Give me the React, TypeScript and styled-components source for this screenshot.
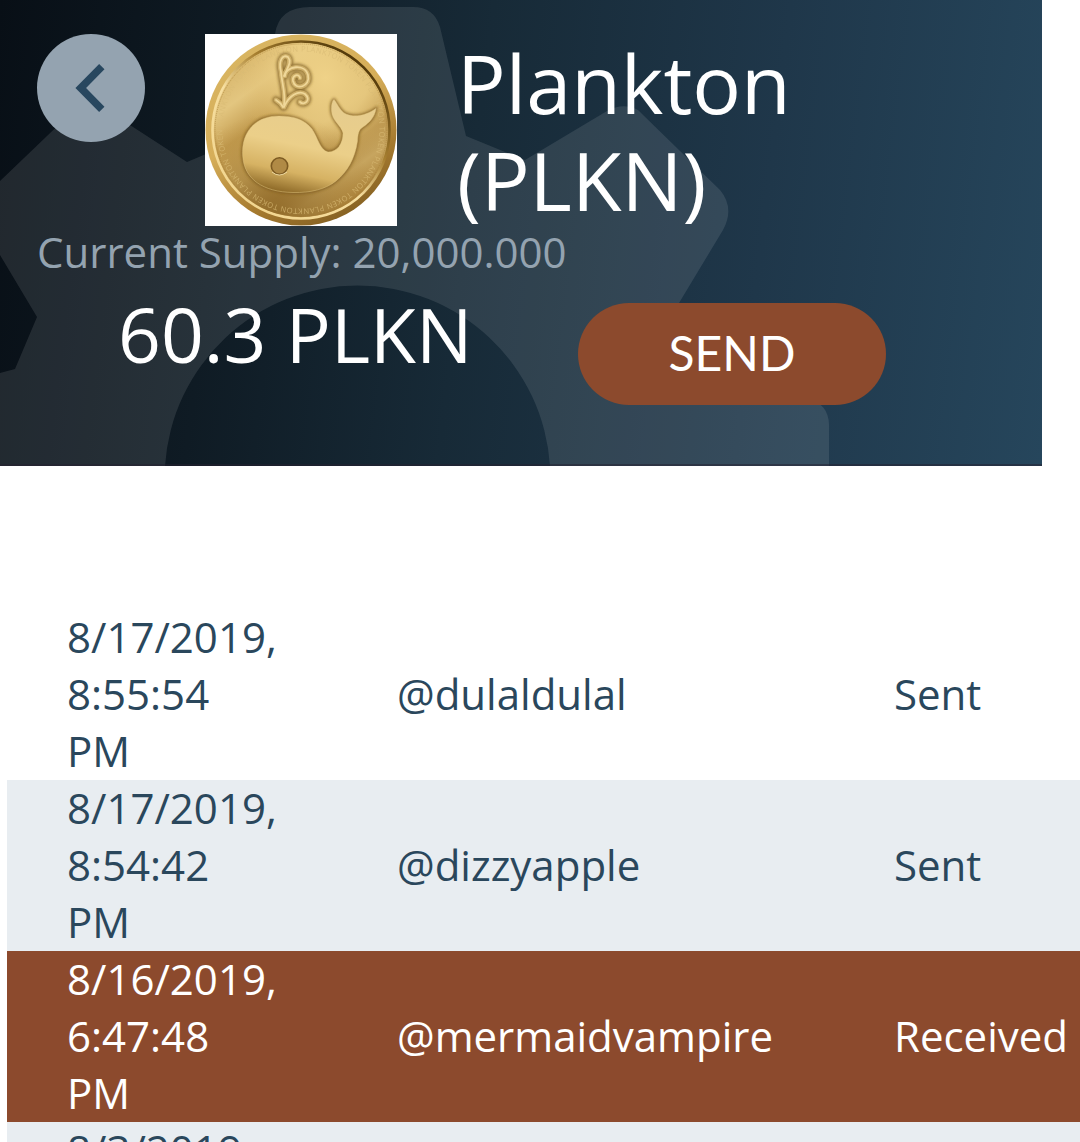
import styled, { createGlobalStyle } from 'styled-components';

interface ITransaction {
	date: string;
	time?: string;
	account?: string;
	type?: 'Sent' | 'Received';
}

const transactions: ITransaction[] = [
	{ date: '8/17/2019,', time: '8:55:54 PM', account: '@dulaldulal', type: 'Sent' },
	{ date: '8/17/2019,', time: '8:54:42 PM', account: '@dizzyapple', type: 'Sent' },
	{ date: '8/16/2019,', time: '6:47:48 PM', account: '@mermaidvampire', type: 'Received' },
	{ date: '8/3/2019,' },
];

const GlobalStyle = createGlobalStyle`
	* {
		box-sizing: border-box;
	}

	body {
		margin: 0;
		background: #fff;
		font-family: 'Open Sans', 'Noto Sans', sans-serif;
		overflow: hidden;
	}
`;

const Page = styled.div`
	height: 1142px;
	overflow: hidden;
`;

const Header = styled.header`
	position: relative;
	width: 1042px;
	height: 466px;
	padding: 34px 37px 0;
	overflow: hidden;
	background: linear-gradient(97deg, #080f16 0%, #0f1b24 22%, #172a37 45%, #1f374a 72%, #26465c 100%);
	color: #fff;

	&::after {
		content: '';
		position: absolute;
		inset: auto 0 0;
		height: 2px;
		background: rgba(38, 32, 48, 0.5);
	}
`;

const Gear = styled.svg`
	position: absolute;
	top: 0;
	left: 0;
`;

const TitleRow = styled.div`
	position: relative;
	display: flex;
	align-items: flex-start;
	height: 192px;
`;

const BackButton = styled.button`
	display: flex;
	align-items: center;
	justify-content: center;
	width: 108px;
	height: 108px;
	padding: 0;
	border: 0;
	border-radius: 50%;
	background: #94a3b0;
`;

const CoinFrame = styled.div`
	width: 192px;
	height: 192px;
	margin-left: 60px;
	background: #fff;

	svg {
		display: block;
	}
`;

const Title = styled.h1`
	width: 400px;
	margin: 0 0 0 60px;
	font-size: 81px;
	font-weight: 400;
	line-height: 97px;
`;

const Supply = styled.p`
	position: relative;
	margin: 0;
	color: #94a3b0;
	font-size: 42px;
	line-height: 51px;
	white-space: nowrap;
`;

const BalanceRow = styled.div`
	position: relative;
	display: flex;
	align-items: flex-start;
	padding-left: 81px;
`;

const Balance = styled.span`
	width: 460px;
	font-size: 75px;
	line-height: 115px;
	white-space: nowrap;
`;

const SendButton = styled.button`
	width: 308px;
	height: 102px;
	margin-top: 26px;
	padding: 0 0 3px;
	border: 0;
	border-radius: 51px;
	background: #8c4a2d;
	color: #fff;
	font-family: Lato, sans-serif;
	font-size: 48px;
`;

const History = styled.div`
	width: 1073px;
	margin: 143px 0 0 7px;
`;

const Row = styled.div<{ $background: string; $color: string }>`
	display: grid;
	grid-template-columns: 330px 497px 1fr;
	align-items: start;
	height: 171px;
	padding-left: 60px;
	background: ${({ $background }) => $background};
	color: ${({ $color }) => $color};
	font-size: 42px;
	line-height: 57px;
	white-space: nowrap;
`;

const Stamp = styled.span`
	width: 210px;
	margin-top: -1px;
	white-space: normal;
`;

const Cell = styled.span`
	line-height: 169px;
`;

const whalePath =
	'M37.7 122 C36 98 50 82 74 82 C88 82 99 85 107 95 C113 104 115 116 123 118 C132 118 138 110 138 99 C136 91 127 87 126.5 77 C126 72 127 67 129 65.5 C132 69 135 77 141 80 C150 84 162 81 171 74.5 C170 83 164 89 158 93 C153 96 153 101 152.5 107 C150 125 142 138 131 147 C121 155 106 159 88 158.5 C58 158 39 145 37.7 122Z';

const Spout: React.FC = () => (
	<>
		<path d="M79 71 C81 60 77 50 76 38 C73 26 78 20 83 23 C88 29 80 36 80 42" />
		<path d="M79 42 C81 32 100 29 103 41 C106 53 90 57 88 47 C87 41 94 39 95 44" />
		<path d="M79 73 C84 61 94 56 100 60 C107 66 99 72 95 68 M78 73 Q76 69 71 66" />
	</>
);

const Coin: React.FC = () => (
	<svg width="192" height="192" viewBox="0 0 192 192">
		<defs>
			<linearGradient id="rim" x1="0.2" y1="0" x2="0.7" y2="1">
				<stop offset="0" stopColor="#d9b663" />
				<stop offset="0.45" stopColor="#d6ae59" />
				<stop offset="0.75" stopColor="#a87c30" />
				<stop offset="1" stopColor="#846022" />
			</linearGradient>
			<linearGradient id="innerRim" x1="0.85" y1="0.1" x2="0.2" y2="0.9">
				<stop offset="0" stopColor="#4c3407" />
				<stop offset="0.35" stopColor="#a77f30" />
				<stop offset="0.6" stopColor="#f7dfa0" />
				<stop offset="1" stopColor="#f2d690" />
			</linearGradient>
			<linearGradient id="face" x1="0.15" y1="0.05" x2="0.8" y2="0.95">
				<stop offset="0" stopColor="#d5b267" />
				<stop offset="0.2" stopColor="#e3c680" />
				<stop offset="0.36" stopColor="#c49d50" />
				<stop offset="0.55" stopColor="#d0ad62" />
				<stop offset="0.72" stopColor="#b28b44" />
				<stop offset="0.83" stopColor="#c7a55f" />
				<stop offset="1" stopColor="#a67b31" />
			</linearGradient>
			<radialGradient id="shine" cx="0.64" cy="0.2" r="0.5">
				<stop offset="0" stopColor="#efd288" />
				<stop offset="0.5" stopColor="#eccf86" stopOpacity="0.75" />
				<stop offset="1" stopColor="#e2bf70" stopOpacity="0" />
			</radialGradient>
			<radialGradient id="shade" cx="0.36" cy="1" r="0.6">
				<stop offset="0" stopColor="#8e6827" stopOpacity="0.95" />
				<stop offset="0.4" stopColor="#95702f" stopOpacity="0.6" />
				<stop offset="1" stopColor="#a67b31" stopOpacity="0" />
			</radialGradient>
			<linearGradient id="whale" x1="0.6" y1="0" x2="0.3" y2="1">
				<stop offset="0" stopColor="#e6cc8e" />
				<stop offset="0.5" stopColor="#ebcf89" />
				<stop offset="0.78" stopColor="#d6b263" />
				<stop offset="1" stopColor="#8c6826" />
			</linearGradient>
			<filter id="soft" x="-20%" y="-20%" width="140%" height="140%">
				<feGaussianBlur stdDeviation="1.6" />
			</filter>
			<path id="legend" d="M96 17.5 A78.5 78.5 0 1 1 95.9 17.5" />
		</defs>
		<circle cx="96" cy="96" r="95.5" fill="url(#rim)" />
		<circle cx="96" cy="96" r="88.5" fill="url(#face)" stroke="url(#innerRim)" strokeWidth="2.6" />
		<circle cx="96" cy="96" r="87" fill="url(#shine)" />
		<circle cx="96" cy="96" r="87" fill="url(#shade)" />
		<circle cx="96" cy="96" r="86" fill="none" stroke="#9d752e" strokeWidth="1" strokeDasharray="1 1" opacity="0.5" />
		<text fill="#d9bb75" fontSize="7.6" opacity="0.75">
			<textPath href="#legend" textLength="490">
				PLANKTON TOKEN PLANKTON TOKEN PLANKTON TOKEN PLANKTON TOKEN PLANKTON TOKEN PLANKTON TOKEN PLANKTON
			</textPath>
		</text>
		<path d={whalePath} fill="#7b591c" stroke="#7b591c" strokeWidth="2.5" opacity="0.85" filter="url(#soft)" />
		<path d={whalePath} fill="url(#whale)" stroke="#e2c781" strokeWidth="0.5" />
		<circle cx="74.5" cy="132" r="8.2" fill="#b08a45" stroke="#7c5a22" strokeWidth="1.6" />
		<path d="M67 138 Q74 144 82 138" fill="none" stroke="#f9e9b5" strokeWidth="0.8" />
		<g fill="none" strokeLinecap="round" strokeLinejoin="round">
			<g stroke="#76561f" strokeWidth="7" opacity="0.75" filter="url(#soft)">
				<Spout />
			</g>
			<g stroke="#cdae68" strokeWidth="4.6">
				<Spout />
			</g>
			<g stroke="#efd799" strokeWidth="1.8">
				<Spout />
			</g>
		</g>
	</svg>
);

const App: React.FC = () => {
	return (
		<Page>
			<GlobalStyle />
			<Header>
				<Gear width="1042" height="466" viewBox="0 0 1042 466">
					<path
						fill="#fff"
						fillOpacity="0.1"
						d="M0 181 L71 113 Q91 98 113 114 L187 162 L249 136 L275 34 Q279 7 310 7 H413 Q434 7 440 27 L466 136 L525 160 L607 111 Q623 102 638 110 L720 190 Q735 208 723 230 L676 308 L700 365 L806 397 Q829 404 829 425 V466 H550 A192.9 192.9 0 0 0 165 466 H0 V373 L15 369 L37 317 L0 255Z"
					/>
				</Gear>
				<TitleRow>
					<BackButton aria-label="Back">
						<svg width="108" height="108" viewBox="0 0 108 108">
							<path d="M64.8 32.6 L43.7 54 L64.8 75.4" fill="none" stroke="#28475f" strokeWidth="7.5" />
						</svg>
					</BackButton>
					<CoinFrame>
						<Coin />
					</CoinFrame>
					<Title>Plankton (PLKN)</Title>
				</TitleRow>
				<Supply>Current Supply: 20,000.000</Supply>
				<BalanceRow>
					<Balance>60.3 PLKN</Balance>
					<SendButton>SEND</SendButton>
				</BalanceRow>
			</Header>
			<History>
				{transactions.map(({ date, time, account, type }, index) => {
					const received = type === 'Received';
					const stripe = index % 2 ? '#e8edf1' : '#fff';

					return (
						<Row
							key={index}
							$background={received ? '#8c4a2d' : stripe}
							$color={received ? '#fff' : '#2a475c'}
						>
							<Stamp>
								{date} {time}
							</Stamp>
							<Cell>{account}</Cell>
							<Cell>{type}</Cell>
						</Row>
					);
				})}
			</History>
		</Page>
	);
};

export default App;
